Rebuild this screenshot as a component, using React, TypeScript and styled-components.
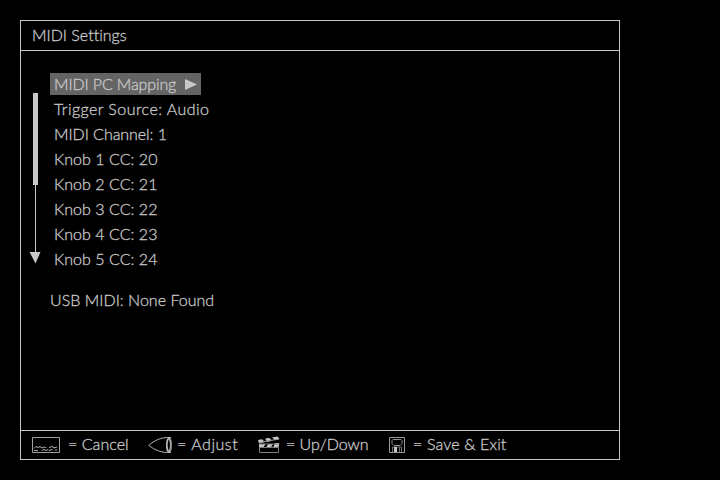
import React from "react";
import styled, { createGlobalStyle } from "styled-components";

const ink = "#c8c8c8";

const GlobalStyle = createGlobalStyle`
  html, body { margin: 0; background: #000; }
  body { overflow: hidden; }
  * { box-sizing: border-box; }
`;

const Screen = styled.main`
  width: 720px;
  height: 480px;
  padding: 20px;
  background: #000;
  color: ${ink};
  font: 300 16px/22px Lato, "Open Sans", sans-serif;
  font-variant-ligatures: none;
  -webkit-text-stroke: 0.3px ${ink};
  white-space: pre;
`;

const Frame = styled.section`
  width: 600px;
  height: 440px;
  border: 1px solid ${ink};
  display: flex;
  flex-direction: column;
`;

const Header = styled.header`
  height: 30px;
  padding: 3px 0 0 11px;
  border-bottom: 1px solid ${ink};
`;

const Content = styled.div`
  flex: 1;
  display: flex;
  padding-top: 22px;
`;

const ScrollTrack = styled.svg`
  width: 12px;
  height: 171px;
  margin: 20px 9px 0 8px;
  flex: none;
`;

const Menu = styled.div`
  display: flex;
  flex-direction: column;
  align-items: flex-start;
  gap: 3px;
`;

const Item = styled.div<{ $selected?: boolean }>`
  width: ${(p) => (p.$selected ? "151px" : "auto")};
  height: 22px;
  padding: 0 4px;
  display: flex;
  align-items: center;
  justify-content: space-between;
  background: ${(p) => (p.$selected ? "#646464" : "transparent")};
`;

const Label = styled.span<{ $spacing?: number }>`
  letter-spacing: ${(p) => p.$spacing ?? 0}px;
`;

const Arrow = styled.svg`
  width: 12px;
  height: 11px;
  flex: none;
`;

const Status = styled.div`
  margin-top: 16px;
`;

const Footer = styled.footer`
  height: 29px;
  border-top: 1px solid ${ink};
  display: flex;
  align-items: flex-start;
  padding-left: 11px;
`;

const Hint = styled.div<{ $width: number; $gap: number }>`
  width: ${(p) => p.$width}px;
  flex: none;
  display: flex;
  gap: ${(p) => p.$gap}px;
  padding-top: 2px;
`;

const Icon = styled.svg`
  flex: none;
  height: 18px;
  margin-top: 3px;
  fill: none;
  stroke: #b4b4b4;
`;

const CancelIcon = () => (
  <Icon width="28" viewBox="0 0 28 18">
    <path d="M.5 1.5h27v15H.5z" stroke="#a0a0a0" />
    <path d="M2 12.5l2-2 2 1 2-1 2 1.5 2-1 2 .5M17 11.5l3-1 2 1.5 3-1M2 14.5h3l1 .5M10 14.5l2-1 2 1 2-1 1 1 3-1 1 1M23 14h2" />
  </Icon>
);

const EyeIcon = () => (
  <Icon width="24" viewBox="0 0 24 18">
    <path d="M23 1.5C13 1 6 4.5 .8 9.5 7 14 13 17 23 16.5" />
    <ellipse cx="20.8" cy="9" rx="2" ry="6.5" strokeWidth="1.8" />
    <path d="M22.5 2.5c1.2 4 1.2 9 0 13" stroke="#888" />
  </Icon>
);

const ClapperIcon = () => (
  <Icon width="22" viewBox="0 0 22 18">
    <path d="M1.5 11v5.5h19V7.5" stroke="#808080" />
    <path d="M0 4l4-.8L7 6l-6 1.5zM7 2.8l4-1L14 4.5 9.5 6zM14 1.5l5.5-1L21.5 3 17 4.3zM1 8h6.5L5 12H1zM10 8h5l-2.5 4H8zM17 7h4.2v1.5L19 12h-4z" fill={ink} stroke="none" />
    <path d="M1 6.5L21 3" stroke="#999" />
    <path d="M1 11.5h19M1 8h20" stroke="#777" />
  </Icon>
);

const SaveIcon = () => (
  <Icon width="16" viewBox="0 0 16 18">
    <path d="M.5 1.5h15v15H.5z" stroke="#999" />
    <path d="M4 3.5h8l1 1v3l-2 2H5l-2-2v-3z" stroke="#909090" />
    <path d="M3.5 16v-5h9v5M10.5 11v5" stroke="#707070" />
    <path d="M5 11h3v5H5z" fill={ink} stroke="none" />
  </Icon>
);

const entries = [
  ["Trigger Source: Audio", 0.45],
  ["MIDI Channel: 1", -0.05],
  ["Knob 1 CC: 20", 0.05],
  ["Knob 2 CC: 21", 0.05],
  ["Knob 3 CC: 22", 0.05],
  ["Knob 4 CC: 23", 0.05],
  ["Knob 5 CC: 24", 0.05],
] as const;

export default function App() {
  return (
    <>
      <GlobalStyle />
      <Screen>
        <Frame>
          <Header><Label>MIDI Settings</Label></Header>
          <Content>
            <ScrollTrack viewBox="0 0 12 171">
              <path d="M4 0h5v92H4zM6 92h1v67H6zM.5 159h11L6.5 170.5z" fill={ink} />
            </ScrollTrack>
            <Menu>
              <Item $selected>
                <Label $spacing={-0.12}>MIDI PC Mapping</Label>
                <Arrow viewBox="0 0 12 11"><path d="M0 0l12 5.5L0 11z" fill={ink} /></Arrow>
              </Item>
              {entries.map(([text, spacing]) => (
                <Item key={text}><Label $spacing={spacing}>{text}</Label></Item>
              ))}
              <Status><Label $spacing={0.02}>USB MIDI: None Found</Label></Status>
            </Menu>
          </Content>
          <Footer>
            <Hint $width={116} $gap={8}><CancelIcon /><Label $spacing={0.05}>= Cancel</Label></Hint>
            <Hint $width={110} $gap={5}><EyeIcon /><Label $spacing={0.55}>= Adjust</Label></Hint>
            <Hint $width={131} $gap={6}><ClapperIcon /><Label>= Up/Down</Label></Hint>
            <Hint $width={140} $gap={8}><SaveIcon /><Label $spacing={0.15}>= Save &amp; Exit</Label></Hint>
          </Footer>
        </Frame>
      </Screen>
    </>
  );
}
